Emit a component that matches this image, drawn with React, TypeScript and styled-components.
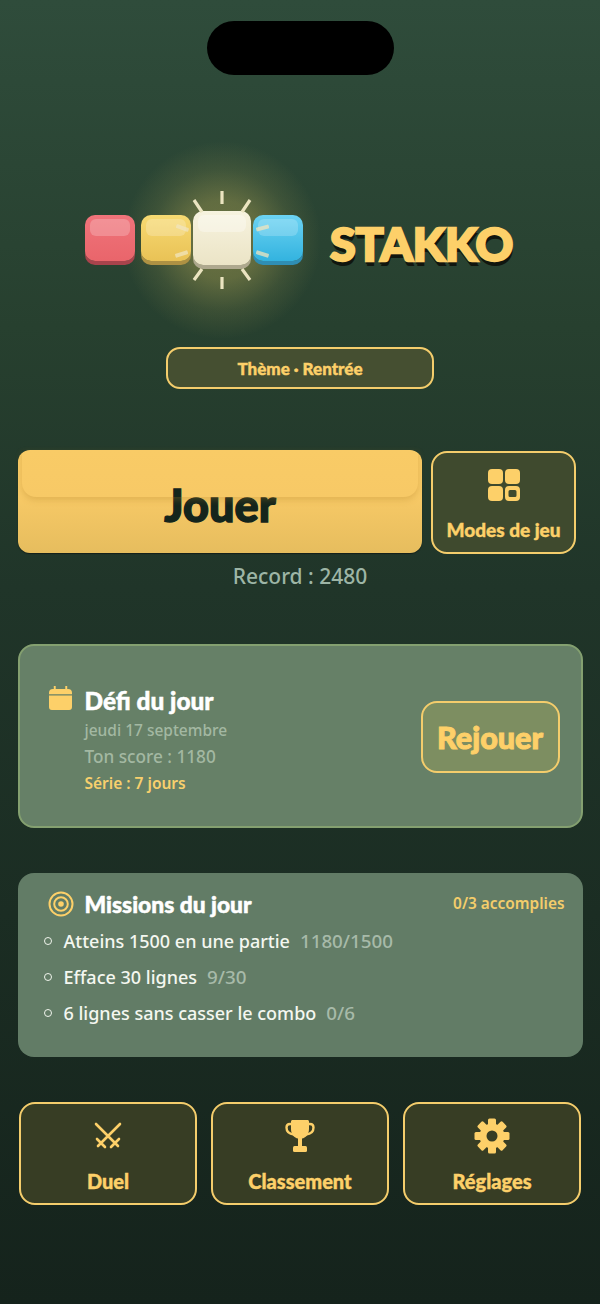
import React from "react";
import styled, { createGlobalStyle } from "styled-components";

const Global = createGlobalStyle`
  html, body { margin: 0; padding: 0; }
  body { background: #15231c; }
`;
const head = `"Lato", "Noto Sans", sans-serif`;
const body = `"Noto Sans", "Open Sans", sans-serif`;
const gold = "#fdd069";

const Page = styled.div`
  width: 600px; height: 1304px; overflow: hidden; box-sizing: border-box;
  display: flex; flex-direction: column; align-items: center;
  padding: 21px 18px 0;
  background: linear-gradient(180deg, #2f4c3b 0%, #27402f 25%, #203529 45%, #1b2d23 70%, #15231c 100%);
  font-family: ${body};
`;
const Island = styled.div`width: 187px; height: 54px; border-radius: 27px; background: #000; flex: none;`;
const LogoRow = styled.div`
  margin-top: 136px; height: 58px; width: 100%;
  display: flex; align-items: center; padding-left: 67px; box-sizing: border-box;
`;
const Blocks = styled.div`position: relative; display: flex; align-items: center; gap: 2px;`;
const Glow = styled.div`
  position: absolute; left: 37px; top: -71px; width: 200px; height: 200px; border-radius: 50%;
  background: radial-gradient(circle, rgba(225,200,95,.36) 0%, rgba(225,200,95,.3) 28%, rgba(225,200,95,.11) 50%, rgba(225,200,95,0) 70%);
`;
const Block = styled.div<{ $c1: string; $c2: string; $edge: string; $size: number; $gap?: number; $hi: string }>`
  position: relative; flex: none; box-sizing: border-box;
  width: ${p => p.$size}px; height: ${p => p.$size - 4}px; margin-bottom: 4px;
  margin-right: ${p => p.$gap ?? 0}px;
  border-radius: 10px;
  background: linear-gradient(180deg, ${p => p.$c1}, ${p => p.$c2});
  box-shadow: 0 4px 0 ${p => p.$edge};
  &::before {
    content: ""; position: absolute; left: 5px; right: 5px; top: 4px; height: 17px;
    border-radius: 6px; background: ${p => p.$hi};
  }
`;
const Glint = styled.i<{ $l: number; $t: number; $r: number }>`
  position: absolute; left: ${p => p.$l}px; top: ${p => p.$t}px; width: 13px; height: 3.5px;
  background: rgba(240,228,190,.75); border-radius: 1px; transform: rotate(${p => p.$r}deg);
`;
const Rays = styled.svg`position: absolute; left: 108px; top: -20px; overflow: visible;`;
const Title = styled.div`
  margin-left: 27px; font-family: ${head}; font-weight: 900; font-size: 46.5px; line-height: 44px;
  color: ${gold}; letter-spacing: -.1px; -webkit-text-stroke: 2.4px ${gold};
  text-shadow: 0 3px 0 #10160f, 1px 5px 0 #10160f;
  position: relative; top: 3px;
`;
const Pill = styled.div`
  margin-top: 78px; width: 268px; height: 42px; box-sizing: border-box; flex: none;
  border: 2px solid #f4cd6c; border-radius: 14px; background: #454f31;
  display: flex; align-items: center; justify-content: center;
  font-family: ${head}; font-weight: 900; font-size: 17px; color: ${gold}; -webkit-text-stroke: .4px ${gold};
`;
const PlayRow = styled.div`margin-top: 61px; width: 100%; display: flex; gap: 9px; align-items: flex-start;`;
const Play = styled.div`
  position: relative; width: 404px; height: 103px; flex: none; box-sizing: border-box;
  border-radius: 12px; padding-top: 30px; text-align: center;
  background: linear-gradient(180deg, #f9cb66 0%, #f7c966 45%, #e6bd5e 100%);
  box-shadow: 0 1px 1px #15201a;
  font-family: ${head}; font-weight: 900; font-size: 45px; line-height: 50px; color: #14251c;
  -webkit-text-stroke: 1.4px #14251c;
  &::before {
    content: ""; position: absolute; left: 4px; right: 4px; top: 0; height: 47px;
    border-radius: 0 0 14px 14px;
    box-shadow: 0 3px 6px rgba(175,130,40,.3);
  }
`;
const Modes = styled.div`
  margin-top: 1px; width: 145px; height: 103px; flex: none; box-sizing: border-box;
  border: 2px solid #f4cd6c; border-radius: 16px; background: #3f4a2e;
  display: flex; flex-direction: column; align-items: center; padding-top: 16px;
  font-family: ${head}; font-weight: 900; font-size: 19px; color: ${gold};
`;
const ModesLabel = styled.span`margin-top: 19px; line-height: 20px; white-space: nowrap; -webkit-text-stroke: .4px ${gold};`;
const Record = styled.div`
  margin-top: 9px; font-size: 21px; line-height: 26px; font-weight: 500; color: #9db5a6;
`;
const DailyCard = styled.div`
  margin-top: 55px; width: 565px; height: 184px; flex: none; box-sizing: border-box;
  border: 2px solid #84a070; border-radius: 16px; background: #668067;
  display: flex; align-items: center; justify-content: space-between;
  padding: 0 21px 0 29px;
`;
const DailyLeft = styled.div`display: flex; gap: 13px; align-items: flex-start; margin-top: 12px;`;
const DailyIcon = styled.svg`margin-top: -1px; flex: none;`;
const DailyText = styled.div`display: flex; flex-direction: column;`;
const CardTitle = styled.div<{ $size: number }>`
  font-family: ${head}; font-weight: 900; font-size: ${p => p.$size}px; line-height: 28px; color: #fff;
  -webkit-text-stroke: .5px #fff; white-space: nowrap;
`;
const Sub = styled.div<{ $size: number; $h: number; $c: string; $w?: number }>`
  font-size: ${p => p.$size}px; line-height: ${p => p.$h}px; color: ${p => p.$c}; font-weight: ${p => p.$w ?? 500}; white-space: nowrap;
`;
const Replay = styled.div`
  width: 139px; height: 72px; flex: none; box-sizing: border-box; margin-top: 2px;
  border: 2px solid #f4cd6c; border-radius: 16px; background: #7d8e61;
  display: flex; align-items: center; justify-content: center;
  font-family: ${head}; font-weight: 900; font-size: 30.5px; color: ${gold}; -webkit-text-stroke: 1px ${gold};
`;
const MissionCard = styled.div`
  margin-top: 45px; width: 565px; height: 184px; flex: none; box-sizing: border-box;
  border-radius: 16px; background: #627c66; padding: 17px 18px 0 26px;
`;
const MissionHead = styled.div`display: flex; align-items: center; gap: 11px; padding-left: 4px; height: 28px;`;
const Count = styled.div`margin-left: auto; font-size: 15.4px; font-weight: 600; color: #f3cd6b; margin-top: -2px;`;
const MissionList = styled.ul`list-style: none; margin: 9px 0 0; padding: 0; display: flex; flex-direction: column; gap: 9px;`;
const MissionItem = styled.li`
  display: flex; align-items: center; height: 27px; font-size: 18px; font-weight: 500; color: #f4f7f0; white-space: nowrap;
`;
const Bullet = styled.i`
  width: 8px; height: 8px; box-sizing: border-box; border: 1.5px solid #f0f4ec; border-radius: 50%; margin-right: 12px; flex: none;
`;
const Prog = styled.span`margin-left: 10px; color: #a7baa9; font-size: 18.8px; font-weight: 500;`;
const Nav = styled.div`margin-top: 45px; width: 562px; display: flex; justify-content: space-between;`;
const NavBtn = styled.div`
  width: 178px; height: 103px; box-sizing: border-box;
  border: 2px solid #f4cd6c; border-radius: 16px; background: #373d24;
  display: flex; flex-direction: column; align-items: center; padding-top: 14px;
  font-family: ${head}; font-weight: 900; font-size: 20px; color: ${gold}; -webkit-text-stroke: .4px ${gold};
`;
const NavIcon = styled.div`height: 36px; display: flex; align-items: center; justify-content: center;`;
const NavLabel = styled.span`margin-top: 15px; line-height: 24px;`;

const Calendar = () => (
  <DailyIcon width="23" height="24" viewBox="0 0 24 25">
    <path fill={gold} d="M5 0h2v3h10V0h2v3h1a4 4 0 0 1 4 4v1.500H0V7a4 4 0 0 1 4-4h1zM0 10h24v12a3 3 0 0 1-3 3H3a3 3 0 0 1-3-3z" />
  </DailyIcon>
);
const Target = () => (
  <svg width="26" height="26" viewBox="0 0 26 26" fill="none" stroke={gold} strokeWidth="2">
    <circle cx="13" cy="13" r="11.500" />
    <circle cx="13" cy="13" r="6.800" />
    <circle cx="13" cy="13" r="2.800" fill={gold} stroke="none" />
  </svg>
);
const Grid = () => (
  <svg width="32" height="32" viewBox="0 0 32 32" fill={gold}>
    <rect x="0" y="0" width="15" height="15" rx="4" />
    <rect x="17" y="0" width="15" height="15" rx="4" />
    <rect x="0" y="17" width="15" height="15" rx="4" />
    <path fillRule="evenodd" d="M21 17h7a4 4 0 0 1 4 4v7a4 4 0 0 1-4 4h-7a4 4 0 0 1-4-4v-7a4 4 0 0 1 4-4zm1 4a1.500 1.500 0 0 0-1.500 1.500v4a1.500 1.500 0 0 0 1.500 1.500h5a1.500 1.500 0 0 0 1.500-1.500v-4a1.500 1.500 0 0 0-1.500-1.500z" />
  </svg>
);
const Swords = () => (
  <svg width="28" height="28" viewBox="0 0 28 28" fill="none" stroke={gold} strokeWidth="2.600" strokeLinecap="round">
    <path d="M2 2l22 22M26 2L4 24M3 17l8 8M17 25l8-8" />
  </svg>
);
const Trophy = () => (
  <svg width="30" height="32" viewBox="0 0 30 32">
    <path fill="none" stroke={gold} strokeWidth="2.400" d="M7 4H5C3 4 1.500 5.500 1.500 7.500 1.500 11 4 14 9 14.500M23 4h2c2 0 3.500 1.500 3.500 3.500 0 3.500-2.500 6.500-7.500 7" />
    <path fill={gold} d="M6 1.500C6 .7 6.700 0 7.500 0h15c.8 0 1.500.7 1.500 1.500V9c0 5.500-3.500 9-7 9.500V26h-4v-7.500C9.500 18 6 14.500 6 9z" />
    <rect x="8" y="26" width="14" height="6" rx="1.500" fill={gold} />
  </svg>
);
const Gear = () => {
  const teeth = [0, 45, 90, 135];
  return (
    <svg width="36" height="36" viewBox="0 0 36 36">
      <g fill={gold}>
        {teeth.map(a => <rect key={a} x="14" y="0.500" width="8" height="35" rx="1.500" transform={`rotate(${a} 18 18)`} />)}
      </g>
      <path fillRule="evenodd" fill={gold} d="M18 5.500a12.500 12.500 0 1 1 0 25 12.500 12.500 0 0 1 0-25z" />
      <circle cx="18" cy="18" r="5.500" fill="#373d24" />
    </svg>
  );
};

export default function App() {
  return (
    <Page>
      <Global />
      <Island />
      <LogoRow>
        <Blocks>
          <Glow />
          <Block $size={50} $gap={4} $c1="#f0747b" $c2="#e9656b" $edge="#a8434c" $hi="rgba(255,255,255,.22)" />
          <Block $size={50} $c1="#f7da72" $c2="#e9c256" $edge="#ae9143" $hi="rgba(255,255,255,.22)">
            <Glint $l={35} $t={11} $r={20} />
            <Glint $l={34} $t={37} $r={-18} />
          </Block>
          <Block $size={58} $c1="#f7f3df" $c2="#ebe4c6" $edge="#aea88e" $hi="rgba(255,255,255,.32)" />
          <Block $size={50} $c1="#6cd3f3" $c2="#33b3df" $edge="#2f8eb4" $hi="rgba(255,255,255,.2)">
            <Glint $l={3} $t={11} $r={-15} />
            <Glint $l={3} $t={37} $r={18} />
          </Block>
          <Rays width="58" height="98" viewBox="0 0 58 98" fill="none" stroke="#ebe4c0" strokeWidth="3.200">
            <path d="M29 0v13M1 9l8 12M57 9l-8 12M1 89l8-11M57 89l-8-11M29 86v12" />
          </Rays>
        </Blocks>
        <Title>STAKKO</Title>
      </LogoRow>
      <Pill>Thème · Rentrée</Pill>
      <PlayRow>
        <Play>Jouer</Play>
        <Modes><Grid /><ModesLabel>Modes de jeu</ModesLabel></Modes>
      </PlayRow>
      <Record>Record : 2480</Record>
      <DailyCard>
        <DailyLeft>
          <Calendar />
          <DailyText>
            <CardTitle $size={24.4}>Défi du jour</CardTitle>
            <Sub $size={15.500} $h={30} $c="#a3b8a2">jeudi 17 septembre</Sub>
            <Sub $size={17.200} $h={24} $c="#a3b8a2">Ton score : 1180</Sub>
            <Sub $size={15.500} $h={28} $c="#f8d06d" $w={600}>Série : 7 jours</Sub>
          </DailyText>
        </DailyLeft>
        <Replay>Rejouer</Replay>
      </DailyCard>
      <MissionCard>
        <MissionHead>
          <Target />
          <CardTitle $size={22.8}>Missions du jour</CardTitle>
          <Count>0/3 accomplies</Count>
        </MissionHead>
        <MissionList>
          <MissionItem><Bullet />Atteins 1500 en une partie<Prog>1180/1500</Prog></MissionItem>
          <MissionItem><Bullet />Efface 30 lignes<Prog>9/30</Prog></MissionItem>
          <MissionItem><Bullet />6 lignes sans casser le combo<Prog>0/6</Prog></MissionItem>
        </MissionList>
      </MissionCard>
      <Nav>
        <NavBtn><NavIcon><Swords /></NavIcon><NavLabel>Duel</NavLabel></NavBtn>
        <NavBtn><NavIcon><Trophy /></NavIcon><NavLabel>Classement</NavLabel></NavBtn>
        <NavBtn><NavIcon><Gear /></NavIcon><NavLabel>Réglages</NavLabel></NavBtn>
      </Nav>
    </Page>
  );
}
